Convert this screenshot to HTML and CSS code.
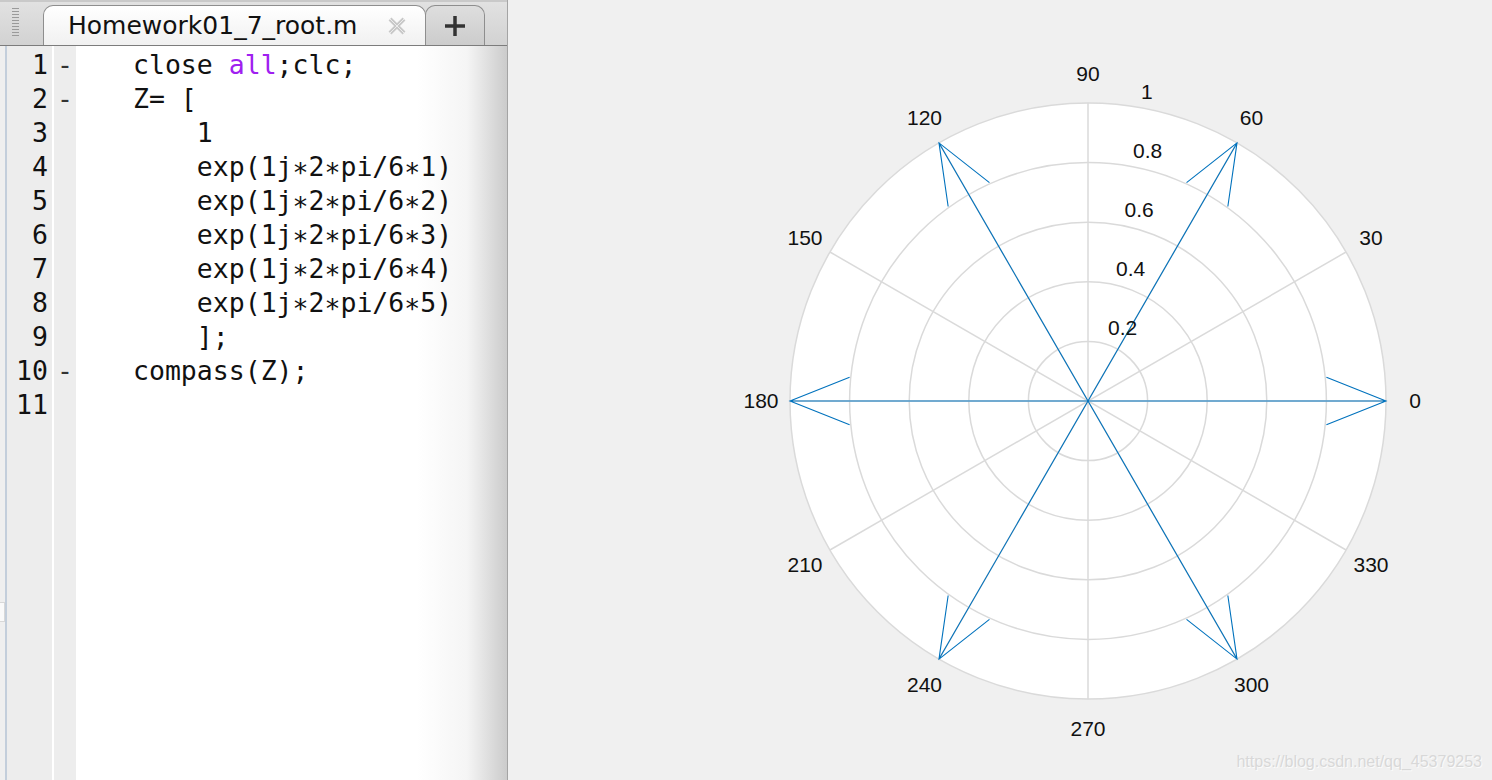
FILE: index.html
```html
<!DOCTYPE html>
<html lang="en">
<head>
    <meta charset="UTF-8">
    <meta name="viewport" content="width=device-width, initial-scale=1.0">
    <title>Homework01_7_root.m</title>
    <link rel="stylesheet" href="styles.css">
</head>
<body>
    <div class="window">
        <!-- Editor panel -->
        <div class="editor">
            <div class="tabbar">
                <div class="grip"></div>
                <div class="tab active">
                    <span class="tab-name">Homework01_7_root.m</span>
                    <svg class="tab-close" width="20" height="20" viewBox="0 0 20 20">
                        <line x1="3" y1="3" x2="17" y2="17" stroke="#c8c8c8" stroke-width="4"/>
                        <line x1="17" y1="3" x2="3" y2="17" stroke="#c8c8c8" stroke-width="4"/>
                        <line x1="3" y1="3" x2="17" y2="17" stroke="#ececec" stroke-width="1"/>
                        <line x1="17" y1="3" x2="3" y2="17" stroke="#ececec" stroke-width="1"/>
                    </svg>
                </div>
                <div class="tab add">
                    <svg width="22" height="22" viewBox="0 0 22 22">
                        <line x1="11" y1="1" x2="11" y2="21" stroke="#333" stroke-width="3.5"/>
                        <line x1="1" y1="11" x2="21" y2="11" stroke="#333" stroke-width="3.5"/>
                    </svg>
                </div>
            </div>
            <div class="code-wrap">
                <div class="edge"><span class="edge-knob"></span></div>
                <div class="lines">
                    <div>1</div><div>2</div><div>3</div><div>4</div><div>5</div><div>6</div>
                    <div>7</div><div>8</div><div>9</div><div>10</div><div>11</div>
                </div>
                <div class="marks">
                    <div>-</div><div>-</div><div></div><div></div><div></div><div></div>
                    <div></div><div></div><div></div><div>-</div><div></div>
                </div>
<pre class="code">close <span class="str">all</span>;clc;
Z= [
    1
    exp(1j<span class="op">*</span>2<span class="op">*</span>pi/6<span class="op">*</span>1)
    exp(1j<span class="op">*</span>2<span class="op">*</span>pi/6<span class="op">*</span>2)
    exp(1j<span class="op">*</span>2<span class="op">*</span>pi/6<span class="op">*</span>3)
    exp(1j<span class="op">*</span>2<span class="op">*</span>pi/6<span class="op">*</span>4)
    exp(1j<span class="op">*</span>2<span class="op">*</span>pi/6<span class="op">*</span>5)
    ];
compass(Z);
</pre>
            </div>
        </div>

        <!-- Figure panel -->
        <div class="figure">
            <svg class="plot" width="984" height="780" viewBox="508 0 984 780">
                <circle cx="1088" cy="401" r="298" fill="#fff"/>
                <g class="grid">
                    <circle cx="1088" cy="401" r="59.6"/>
                    <circle cx="1088" cy="401" r="119.2"/>
                    <circle cx="1088" cy="401" r="178.8"/>
                    <circle cx="1088" cy="401" r="238.4"/>
                    <circle cx="1088" cy="401" r="298"/>
                    <line x1="1386" y1="401" x2="790" y2="401"/>
                    <line x1="1346.07" y1="252" x2="829.93" y2="550"/>
                    <line x1="1237" y1="142.93" x2="939" y2="659.07"/>
                    <line x1="1088" y1="103" x2="1088" y2="699"/>
                    <line x1="939" y1="142.93" x2="1237" y2="659.07"/>
                    <line x1="829.93" y1="252" x2="1346.07" y2="550"/>
                </g>
                <g class="arrows">
                    <polyline points="1088,401 1386,401 1326.4,377.16 1386,401 1326.4,424.84"/>
                    <polyline points="1088,401 1237,142.93 1186.55,182.62 1237,142.93 1227.85,206.46"/>
                    <polyline points="1088,401 939,142.93 948.15,206.46 939,142.93 989.45,182.62"/>
                    <polyline points="1088,401 790,401 849.6,424.84 790,401 849.6,377.16"/>
                    <polyline points="1088,401 939,659.07 989.45,619.38 939,659.07 948.15,595.54"/>
                    <polyline points="1088,401 1237,659.07 1227.85,595.54 1237,659.07 1186.55,619.38"/>
                </g>
                <g class="angle-labels">
                    <text x="1415" y="408">0</text>
                    <text x="1371" y="245">30</text>
                    <text x="1251.5" y="125">60</text>
                    <text x="1088" y="81">90</text>
                    <text x="924.5" y="125">120</text>
                    <text x="805" y="245">150</text>
                    <text x="761" y="408">180</text>
                    <text x="805" y="572">210</text>
                    <text x="924.5" y="692">240</text>
                    <text x="1088" y="736">270</text>
                    <text x="1251.5" y="692">300</text>
                    <text x="1371" y="572">330</text>
                </g>
                <g class="radius-labels">
                    <text x="1108" y="334.5">0.2</text>
                    <text x="1116" y="276">0.4</text>
                    <text x="1124.5" y="217">0.6</text>
                    <text x="1133" y="157.5">0.8</text>
                    <text x="1141" y="99">1</text>
                </g>
            </svg>
            <span class="watermark">https://blog.csdn.net/qq_45379253</span>
        </div>
    </div>
</body>
</html>
```

FILE: styles.css
```css
body {
    margin: 0;
    background-color: #f0f0f0;
    overflow: hidden;
}
.window {
    display: flex;
    width: 1492px;
    height: 780px;
}

/* editor */
.editor {
    width: 507px;
    border-right: 1px solid #a4a4a4;
    display: flex;
    flex-direction: column;
    background: #fff;
}
.tabbar {
    position: relative;
    height: 45px;
    border-bottom: 1px solid #7c7c7c;
    background: linear-gradient(to bottom, #e2e2e2, #d2d2d2);
    box-shadow: inset 0 2px 0 #c9c9c9;
}
.grip {
    position: absolute;
    left: 12px;
    top: 8px;
    width: 7px;
    height: 30px;
    background: repeating-linear-gradient(to bottom, #9a9a9a 0, #9a9a9a 1px, transparent 1px, transparent 3px);
}
.tab {
    position: absolute;
    top: 5px;
    height: 40px;
    box-sizing: border-box;
    border: 1.5px solid #8e8e8e;
    border-bottom: none;
    border-radius: 10px 10px 0 0;
    display: flex;
    align-items: center;
}
.tab.active {
    left: 43px;
    width: 383px;
    background: linear-gradient(to bottom, #ffffff, #f1f1f1);
    z-index: 1;
}
.tab-name {
    margin-left: 24px;
    font-family: "DejaVu Sans", sans-serif;
    font-size: 25px;
    color: #111;
}
.tab-close {
    margin-left: 30px;
}
.tab.add {
    left: 425px;
    width: 60px;
    background: linear-gradient(to bottom, #dedede, #cccccc);
    justify-content: center;
}
.code-wrap {
    flex: 1;
    display: flex;
    font-family: "DejaVu Sans Mono", monospace;
    font-size: 26.5px;
    line-height: 34px;
    color: #111;
}
.edge {
    position: relative;
    width: 5px;
    background: #efefef;
}
.edge-knob {
    position: absolute;
    left: 0;
    top: 556px;
    width: 4px;
    height: 18px;
    background: #fafafa;
    border: 1px solid #d8d8d8;
    border-left: none;
}
.lines {
    width: 41px;
    padding: 2px 4px 0 0;
    border-left: 2px solid #c3cedb;
    background: #ededed;
    text-align: right;
}
.marks {
    width: 22px;
    margin-left: 2px;
    padding-top: 2px;
    background: #ededed;
    text-align: center;
    color: #333;
}
.marks div,
.lines div {
    height: 34px;
}
.code {
    flex: 1;
    margin: 0;
    padding: 2px 0 0 57px;
    font: inherit;
    background: linear-gradient(to right, #fff calc(100% - 90px), #f5f5f5 calc(100% - 40px), #cbcbcb 100%);
}
.str {
    color: #a020f0;
}
.op {
    position: relative;
    top: 0.24em;
}

/* figure */
.figure {
    position: relative;
    flex: 1;
    background: #f0f0f0;
}
.plot {
    display: block;
}
.grid circle,
.grid line {
    fill: none;
    stroke: #dadada;
    stroke-width: 1.5;
}
.arrows polyline {
    fill: none;
    stroke: #0072bd;
    stroke-width: 1.1;
}
.plot text {
    font-family: "Liberation Sans", Arial, sans-serif;
    font-size: 21px;
    fill: #111;
}
.angle-labels text {
    text-anchor: middle;
}
.watermark {
    position: absolute;
    right: 10px;
    bottom: 9px;
    font-family: "Liberation Sans", Arial, sans-serif;
    font-size: 16px;
    color: #d8d8d8;
    text-shadow: 1px 1px 0 #fbfbfb;
}
```
